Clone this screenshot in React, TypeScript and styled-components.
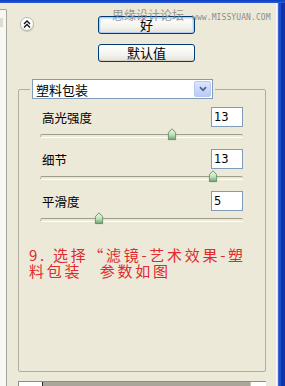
import React from 'react';
import styled, { createGlobalStyle } from 'styled-components';

const GlobalStyle = createGlobalStyle`
  html, body {
    margin: 0;
    padding: 0;
    background: #ece9d8;
  }
  * {
    box-sizing: border-box;
  }
`;

const cjk = `"Noto Sans CJK SC", "Liberation Sans", sans-serif`;

// Window frame
const Frame = styled.div`
  width: 285px;
  height: 386px;
  display: flex;
  flex-direction: column;
  overflow: hidden;
  background: #ece9d8;
`;

const TopEdge = styled.div`
  height: 3px;
  background: linear-gradient(#0b3fc0, #2a5ad6);
`;

const Body = styled.div`
  flex: 1;
  display: flex;
  min-height: 0;
`;

const LeftStrip = styled.div`
  width: 7px;
  margin-top: 6px;
  background: #f7f7f3;
  border-top: 1px solid #a6a69a;
  border-right: 1px solid #a6a69a;
  border-top-right-radius: 2px;
  position: relative;
`;

const StripNub = styled.div`
  position: absolute;
  left: 0;
  top: 8px;
  width: 3px;
  height: 9px;
  background: #dcdcd4;
`;

const RightEdge = styled.div`
  width: 9px;
  background: linear-gradient(
    90deg,
    #fbfaf5 0 1px,
    #e0ddcc 1px 2px,
    #3b66d8 2px 3px,
    #1c4bcc 3px 5px,
    #0d34a8 5px 9px
  );
`;

const Main = styled.div`
  flex: 1;
  display: flex;
  flex-direction: column;
  min-width: 0;
`;

// Header with the collapse button and the dialog buttons
const Header = styled.div`
  position: relative;
  display: flex;
  align-items: flex-start;
  padding-top: 13px;
`;

const Collapse = styled.button`
  width: 14px;
  height: 14px;
  margin: 1px 0 0 13px;
  padding: 0;
  border: 1px solid #b9b8ae;
  border-radius: 50%;
  background: radial-gradient(circle at 40% 35%, #ffffff 55%, #e2e1da);
  box-shadow: 0 1px 1px rgba(0, 0, 0, 0.15);
  display: flex;
  align-items: center;
  justify-content: center;
`;

const ButtonColumn = styled.div`
  display: flex;
  flex-direction: column;
  gap: 10px;
  margin-left: 64px;
`;

const DialogButton = styled.button<{ $default?: boolean }>`
  width: 97px;
  height: 18px;
  padding: 0;
  border: 1px solid #003c74;
  border-radius: 3px;
  background: linear-gradient(#ffffff, #f4f3ee 60%, #e3e2da);
  box-shadow: ${p => (p.$default ? 'inset 0 0 0 1px #b5cdf3, inset 0 0 0 2px #dbe6f8' : 'inset 0 -1px 0 #d6d0c5')};
  font-family: ${cjk};
  font-size: 13px;
  line-height: 16px;
  color: #000;
`;

const Watermark = styled.div`
  position: absolute;
  left: 105px;
  top: 5px;
  display: flex;
  align-items: baseline;
  gap: 8px;
  color: #8c8c8c;
  pointer-events: none;
  white-space: nowrap;
`;

const WatermarkCn = styled.span`
  font-family: ${cjk};
  font-size: 12px;
  line-height: 14px;
  opacity: 0.9;
`;

const WatermarkEn = styled.span`
  font-family: "DejaVu Sans Mono", monospace;
  font-size: 8px;
  letter-spacing: 0.1px;
`;

// Group box with the filter select as its legend
const Group = styled.fieldset`
  flex: 1;
  min-height: 0;
  margin: 17px 10px 9px 11px;
  padding: 0;
  border: 1px solid #b0ae9e;
  border-radius: 2px;
  min-width: 0;
`;

const Legend = styled.legend`
  margin-left: 11px;
  padding: 0 2px;
`;

const Select = styled.div`
  width: 181px;
  height: 20px;
  display: flex;
  align-items: center;
  justify-content: space-between;
  border: 1px solid #7f9db9;
  background: #fff;
  padding: 0 1px 0 3px;
  font-family: ${cjk};
  font-size: 13px;
  color: #000;
`;

const SelectArrow = styled.span`
  width: 17px;
  height: 16px;
  border-radius: 2px;
  border: 1px solid #b7c9f3;
  background: linear-gradient(#dbe5fd, #b9cbf7);
  display: flex;
  align-items: center;
  justify-content: center;
`;

const Rows = styled.div`
  padding-top: 8px;
`;

const Row = styled.div`
  display: flex;
  align-items: center;
  justify-content: space-between;
  padding: 0 22px 0 23px;
  height: 20px;
`;

const Label = styled.span`
  font-family: ${cjk};
  font-size: 12.5px;
  color: #000;
`;

const NumberBox = styled.div`
  width: 32px;
  height: 20px;
  border: 1px solid #7f9db9;
  background: #fff;
  padding-left: 2px;
  font-family: "DejaVu Sans", sans-serif;
  font-size: 11.5px;
  line-height: 18px;
  color: #000;
`;

const Slider = styled.div`
  position: relative;
  height: 14px;
  margin: 1px 22px 7px 21px;

  &::before {
    content: '';
    position: absolute;
    left: 0;
    right: 0;
    top: 6px;
    height: 2px;
    border-top: 1px solid #9d9d8f;
    border-bottom: 1px solid #ffffff;
    border-left: 1px solid #b9b8aa;
    border-radius: 2px;
  }
`;

const Thumb = styled.svg`
  position: absolute;
  top: 0;
  transform: translateX(-50%);
`;

const Note = styled.div`
  margin-top: 21px;
  padding-left: 10px;
  font-family: ${cjk};
  font-size: 15px;
  line-height: 16px;
  letter-spacing: 2.7px;
  color: #e02a2e;
  white-space: nowrap;
`;

const BottomBar = styled.div`
  height: 5px;
  margin: 0 10px 0 11px;
  display: flex;
  border-top: 1px solid #8e8d82;
  border-left: 1px solid #8e8d82;
  background: #aaa79a;
`;

const BarCell = styled.div<{ $w: number }>`
  width: ${p => p.$w}px;
  background: #fff;
  border-right: 1px solid #2b2b2b;
`;

const BarEnd = styled.div`
  margin-left: auto;
  width: 16px;
  background: #fff;
  border-left: 1px solid #c8c6ba;
`;

interface Param {
  label: string;
  value: number;
  pos: number;
}

const params: Param[] = [
  { label: '高光强度', value: 13, pos: 0.65 },
  { label: '细节', value: 13, pos: 0.852 },
  { label: '平滑度', value: 5, pos: 0.29 },
];

const ThumbIcon: React.FC<{ pos: number }> = ({ pos }) => (
  <Thumb width="9" height="13" viewBox="0 0 9 13" style={{ left: `${pos * 100}%` }}>
    <defs>
      <linearGradient id="thumbFill" x1="0" y1="0" x2="0" y2="1">
        <stop offset="0" stopColor="#eef8ec" />
        <stop offset="0.55" stopColor="#c2e0bd" />
        <stop offset="1" stopColor="#6aa373" />
      </linearGradient>
    </defs>
    <path d="M4.5 0.8 L8.2 4.6 V11.6 H0.8 V4.6 Z" fill="url(#thumbFill)" stroke="#5b8a63" strokeWidth="0.9" />
  </Thumb>
);

const App: React.FC = () => {
  return (
    <Frame>
      <GlobalStyle />
      <TopEdge />
      <Body>
        <LeftStrip>
          <StripNub />
        </LeftStrip>
        <Main>
          <Header>
            <Collapse>
              <svg width="8" height="8" viewBox="0 0 8 8">
                <path d="M1 4 L4 1 L7 4 M1 7.5 L4 4.5 L7 7.5" fill="none" stroke="#111" strokeWidth="1.3" />
              </svg>
            </Collapse>
            <ButtonColumn>
              <DialogButton $default>好</DialogButton>
              <DialogButton>默认值</DialogButton>
            </ButtonColumn>
            <Watermark>
              <WatermarkCn>思缘设计论坛</WatermarkCn>
              <WatermarkEn>www.MISSYUAN.COM</WatermarkEn>
            </Watermark>
          </Header>

          <Group>
            <Legend>
              <Select>
                <span>塑料包装</span>
                <SelectArrow>
                  <svg width="8" height="6" viewBox="0 0 8 6">
                    <path d="M1 1.2 L4 4.3 L7 1.2" fill="none" stroke="#4d6185" strokeWidth="1.7" />
                  </svg>
                </SelectArrow>
              </Select>
            </Legend>
            <Rows>
              {params.map(p => (
                <React.Fragment key={p.label}>
                  <Row>
                    <Label>{p.label}</Label>
                    <NumberBox>{p.value}</NumberBox>
                  </Row>
                  <Slider>
                    <ThumbIcon pos={p.pos} />
                  </Slider>
                </React.Fragment>
              ))}
            </Rows>
            <Note>
              9. 选择“滤镜-艺术效果-塑<br />
              料包装　参数如图
            </Note>
          </Group>

          <BottomBar>
            <BarCell $w={24} />
            <BarEnd />
          </BottomBar>
        </Main>
        <RightEdge />
      </Body>
    </Frame>
  );
};

export default App;
